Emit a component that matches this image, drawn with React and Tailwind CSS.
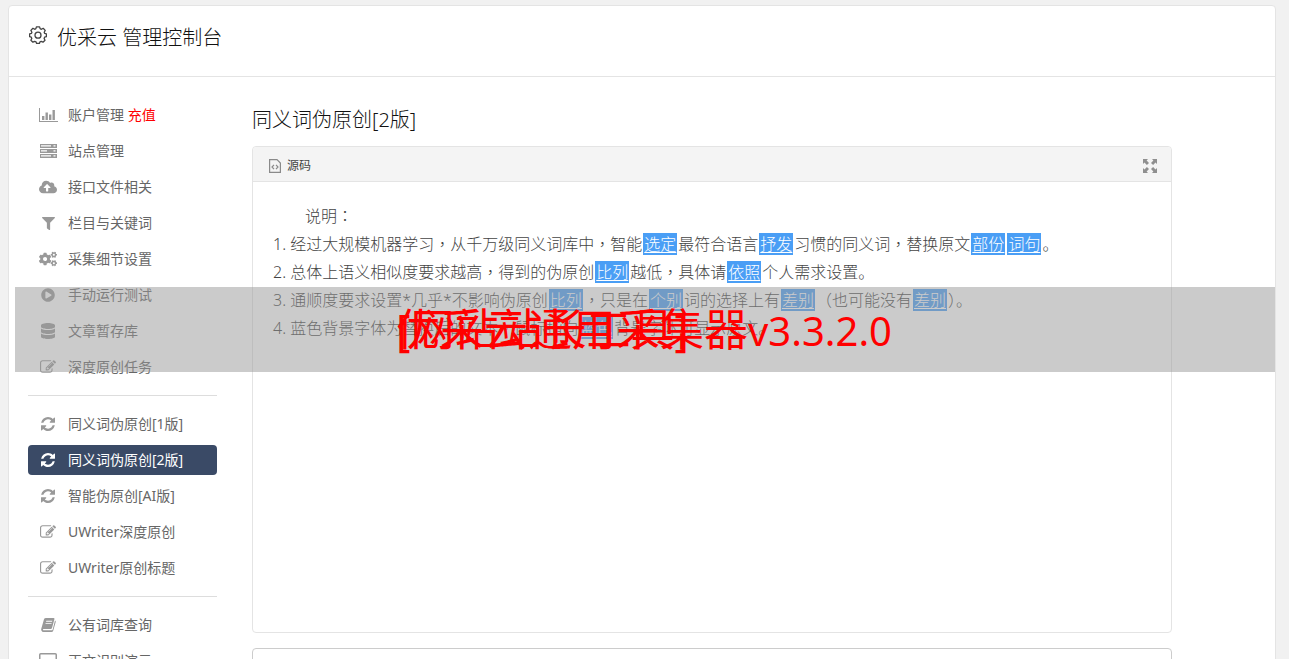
import React from 'react'
import { FaCloudUploadAlt, FaFilter, FaCogs, FaPlayCircle, FaDatabase } from 'react-icons/fa'

const BarChartIcon = () => (
  <svg width="19" height="16" viewBox="0 0 19 16" fill="currentColor">
    <path d="M0 1h1v13h18v1H0zM3 9h2.4v4H3zM6.500 5.500h2.400V13H6.500zM10 7.500h2.400V13H10zM13.500 3h2.400v10h-2.400z" />
  </svg>
)

const ServerIcon = () => (
  <svg width="17" height="14" viewBox="0 0 17 14" fill="currentColor">
    <path fillRule="evenodd" d="M0 0h17v4H0zM1 1.300v1.200h10v-1.200zM13.500 1.300v1.200h2v-1.200zM0 5h17v4H0zM1 6.300v1.200h6v-1.200zM13.500 6.300v1.200h2v-1.200zM0 10h17v4H0zM1 11.300v1.200h10v-1.200zM13.500 11.300v1.200h2v-1.200z" />
  </svg>
)

const RefreshIcon = () => (
  <svg width="14" height="14" viewBox="0 0 1536 1536" fill="currentColor">
    <path d="M1511 928q0 5-1 7-64 268-268 434.500t-478 166.500q-146 0-282.500-55t-243.500-157l-129 129q-19 19-45 19t-45-19-19-45v-448q0-26 19-45t45-19h448q26 0 45 19t19 45-19 45l-137 137q71 66 161 102t187 36q134 0 250-65t186-179q11-17 53-117 8-23 30-23h192q13 0 22.500 9.500t9.500 22.500zm25-800v448q0 26-19 45t-45 19h-448q-26 0-45-19t-19-45 19-45l138-138q-148-137-349-137-134 0-250 65t-186 179q-11 17-53 117-8 23-30 23h-199q-13 0-22.500-9.500t-9.500-22.500v-7q65-268 270-434.500t480-166.500q146 0 284 55.500t245 156.500l130-129q19-19 45-19t45 19 19 45z" />
  </svg>
)

const EditIcon = () => (
  <svg width="16" height="16" viewBox="0 0 1792 1792" fill="currentColor">
    <path d="M888 1184l116-116-152-152-116 116v56h96v96h56zm440-720q-16-16-33 1l-350 350q-17 17-1 33t33-1l350-350q17-17 1-33zm80 594v190q0 119-84.500 203.500t-203.500 84.500h-832q-119 0-203.500-84.500t-84.500-203.500v-832q0-119 84.500-203.500t203.500-84.500h832q63 0 117 25 15 7 18 23 3 17-9 29l-49 49q-14 14-32 8-23-6-45-6h-832q-66 0-113 47t-47 113v832q0 66 47 113t113 47h832q66 0 113-47t47-113v-126q0-13 9-22l64-64q15-15 35-7t20 29zm-96-738l288 288-672 672h-288v-288zm444 132l-92 92-288-288 92-92q28-28 68-28t68 28l152 152q28 28 28 68t-28 68z" />
  </svg>
)

const BookIcon = () => (
  <svg width="15" height="14" viewBox="0 0 15 14" fill="currentColor">
    <path fillRule="evenodd" d="M5 0h7.500q1.300 0 .9 1.300L11 10q-.3 1-1.300 1H2.500q-.8 0-.6.700.2.600 1 .6h7.600q.9 0 1.200-.9L14 2.600q1 .5.700 1.500l-2.500 8.600Q11.800 14 10.500 14H2.600Q1 14 .4 12.500q-.5-1 0-2.300L3 1.300Q3.400 0 5 0zM5.300 2.800L5 3.700h6l.3-.9zM4.700 4.900l-.3.900h6l.3-.9z" />
  </svg>
)

const MonitorIcon = () => (
  <svg width="18" height="16" viewBox="0 0 18 16" fill="none" stroke="currentColor" strokeWidth="1.500">
    <rect x=".75" y=".75" width="16.500" height="11.500" rx="1" />
    <path d="M5 15h8M9 12v3" />
  </svg>
)

const GearIcon = () => (
  <svg width="18" height="18" viewBox="0 0 18 18" fill="none" stroke="#444" strokeWidth="1.300" strokeLinejoin="round">
    <path d="M7.4 .8h3.2l.5 1.900 1.300.6 1.800-1 2 2.100-1 1.800.5 1.200 1.700.5v2.700l-1.800.6-.5 1.200.9 1.800-2 2-1.800-.9-1.200.5-.6 1.600H7.600L7 15.800l-1.300-.5-1.800.9-2-2 .9-1.800-.5-1.200-1.700-.6V7.900l1.800-.5.5-1.200-1-1.800 2-2.100 1.800 1 1.200-.6z" />
    <circle cx="9" cy="9.200" r="3" />
  </svg>
)

const SourceIcon = () => (
  <svg width="12" height="14" viewBox="0 0 12 14" fill="none" stroke="#8a8a8a" strokeWidth="1.200">
    <path d="M.6.600h7.400l3.400 3.400v9.400H.6z" />
    <path d="M5 5.800L3 8l2 2.200M7 5.800L9 8l-2 2.200" />
  </svg>
)

const ExpandIcon = () => (
  <svg width="14" height="14" viewBox="0 0 14 14" fill="#8f8f8f">
    <path d="M0 0h5L3.600 1.500 6 3.900 3.900 6 1.500 3.600 0 5zM14 0v5l-1.500-1.400L10.100 6 8 3.900l2.400-2.400L9 0zM0 14V9l1.500 1.400L3.900 8 6 10.100l-2.400 2.400L5 14zM14 14H9l1.400-1.500L8 10.100 10.100 8l2.400 2.400L14 9z" />
  </svg>
)

const groups = [
  [
    { label: '账户管理', extra: '充值', icon: <BarChartIcon /> },
    { label: '站点管理', icon: <ServerIcon /> },
    { label: '接口文件相关', icon: <FaCloudUploadAlt size={18} /> },
    { label: '栏目与关键词', icon: <FaFilter size={13} /> },
    { label: '采集细节设置', icon: <FaCogs size={18} /> },
    { label: '手动运行测试', icon: <FaPlayCircle size={14} /> },
    { label: '文章暂存库', icon: <FaDatabase size={16} /> },
    { label: '深度原创任务', icon: <EditIcon /> },
  ],
  [
    { label: '同义词伪原创[1版]', icon: <RefreshIcon /> },
    { label: '同义词伪原创[2版]', icon: <RefreshIcon />, active: true },
    { label: '智能伪原创[AI版]', icon: <RefreshIcon /> },
    { label: 'UWriter深度原创', icon: <EditIcon /> },
    { label: 'UWriter原创标题', icon: <EditIcon /> },
  ],
  [
    { label: '公有词库查询', icon: <BookIcon /> },
    { label: '正文识别演示', icon: <MonitorIcon /> },
  ],
]

const NavItem = ({ item }) => (
  <li>
    <a
      href="#"
      className={
        item.active
          ? 'flex h-[30px] items-center gap-2.5 rounded bg-[#3a4a66] pl-2.5 text-white'
          : 'flex h-[30px] items-center gap-2.5 rounded pl-2.5 text-[#666]'
      }
    >
      <span className={item.active ? 'flex w-5 justify-center' : 'flex w-5 justify-center text-[#999]'}>{item.icon}</span>
      <span>
        {item.label}
        {item.extra && <span className="text-[#f00]"> {item.extra}</span>}
      </span>
    </a>
  </li>
)

const Word = ({ children }) => (
  <span className="mx-px bg-[#4a9ef5] px-px text-white underline underline-offset-2">{children}</span>
)

// punctuation set in the middle of its square
const Mark = ({ children }) => <span className="font-['Noto_Sans_CJK_TC',sans-serif] leading-none">{children}</span>

const App = () => {
  return (
    <div className="h-screen overflow-hidden bg-[#f1f1f1] px-2 pt-[5px] font-['Noto_Sans','Noto_Sans_CJK_SC',sans-serif]">
      <div className="relative mr-[5px] min-h-screen rounded-t border border-[#e4e4e4] bg-white">
        <header className="flex h-[71px] items-start gap-2.5 border-b border-[#e4e4e4] pt-4 pl-5">
          <span className="pt-1">
            <GearIcon />
          </span>
          <h1 className="text-[20px] leading-8 font-light text-[#111]">优采云 管理控制台</h1>
        </header>

        <div className="flex pt-[23px] pl-[19px]">
          <nav className="w-[189px] shrink-0 text-[14px] leading-5">
            {groups.map((group, index) => (
              <ul
                key={index}
                className={
                  index > 0 ? 'mt-[13px] flex flex-col gap-1.5 border-t border-[#ddd] pt-[13px]' : 'flex flex-col gap-1.5'
                }
              >
                {group.map((item) => (
                  <NavItem key={item.label} item={item} />
                ))}
              </ul>
            ))}
          </nav>

          <main className="mr-[103px] ml-[35px] flex-1 pt-1">
            <h2 className="text-[20px] leading-8 font-light text-[#111]">同义词伪原创[2版]</h2>

            <section className="mt-2.5 h-[487px] rounded border border-[#e4e4e4]">
              <div className="flex h-[35px] items-center justify-between rounded-t border-b border-[#e4e4e4] bg-[#f4f4f4] pt-1 pr-3.5 pl-4">
                <button type="button" className="flex items-center gap-1.5 text-[12px] leading-4 text-[#444]">
                  <SourceIcon />
                  源码
                </button>
                <button type="button" aria-label="全屏">
                  <ExpandIcon />
                </button>
              </div>
              <div className="px-5 pt-5 text-[16px] leading-7 font-light text-[#444]">
                <p className="pl-8">说明<Mark>：</Mark></p>
                <p>
                  1. 经过大规模机器学习<Mark>，</Mark>从千万级同义词库中<Mark>，</Mark>智能<Word>选定</Word>最符合语言
                  <Word>抒发</Word>习惯的同义词<Mark>，</Mark>替换原文<Word>部份</Word><Word>词句</Word>。
                </p>
                <p>
                  2. 总体上语义相似度要求越高<Mark>，</Mark>得到的伪原创<Word>比列</Word>越低<Mark>，</Mark>具体请
                  <Word>依照</Word>个人需求设置。
                </p>
                <p>
                  3. 通顺度要求设置*几乎*不影响伪原创<Word>比列</Word><Mark>，</Mark>只是在<Word>个别</Word>词的选择上有
                  <Word>差别</Word><Mark>（</Mark>也可能没有<Word>差别</Word><Mark>）</Mark>。
                </p>
                <p>
                  4. 蓝色背景字体为替换后的文本<Mark>，</Mark>鼠标指向<Word>蓝色</Word>背景字体可显示原文。
                </p>
              </div>
            </section>

            <section className="mt-[15px] h-20 rounded border border-[#ccc]"></section>
          </main>
        </div>

        {/* banner over the page, both titles share one line */}
        <div className="absolute top-[281px] right-0 left-1.5 h-[85px] bg-[#979797]/50 text-[44px] leading-[85px] text-[#f00]">
          <p className="absolute left-[381px] whitespace-nowrap">
            优采云通用采集器<span className="text-[40px]">v3.3.2.0</span>
          </p>
          <p className="absolute left-[381px] whitespace-nowrap">[网站站长工具]</p>
        </div>
      </div>
    </div>
  )
}

export default App
